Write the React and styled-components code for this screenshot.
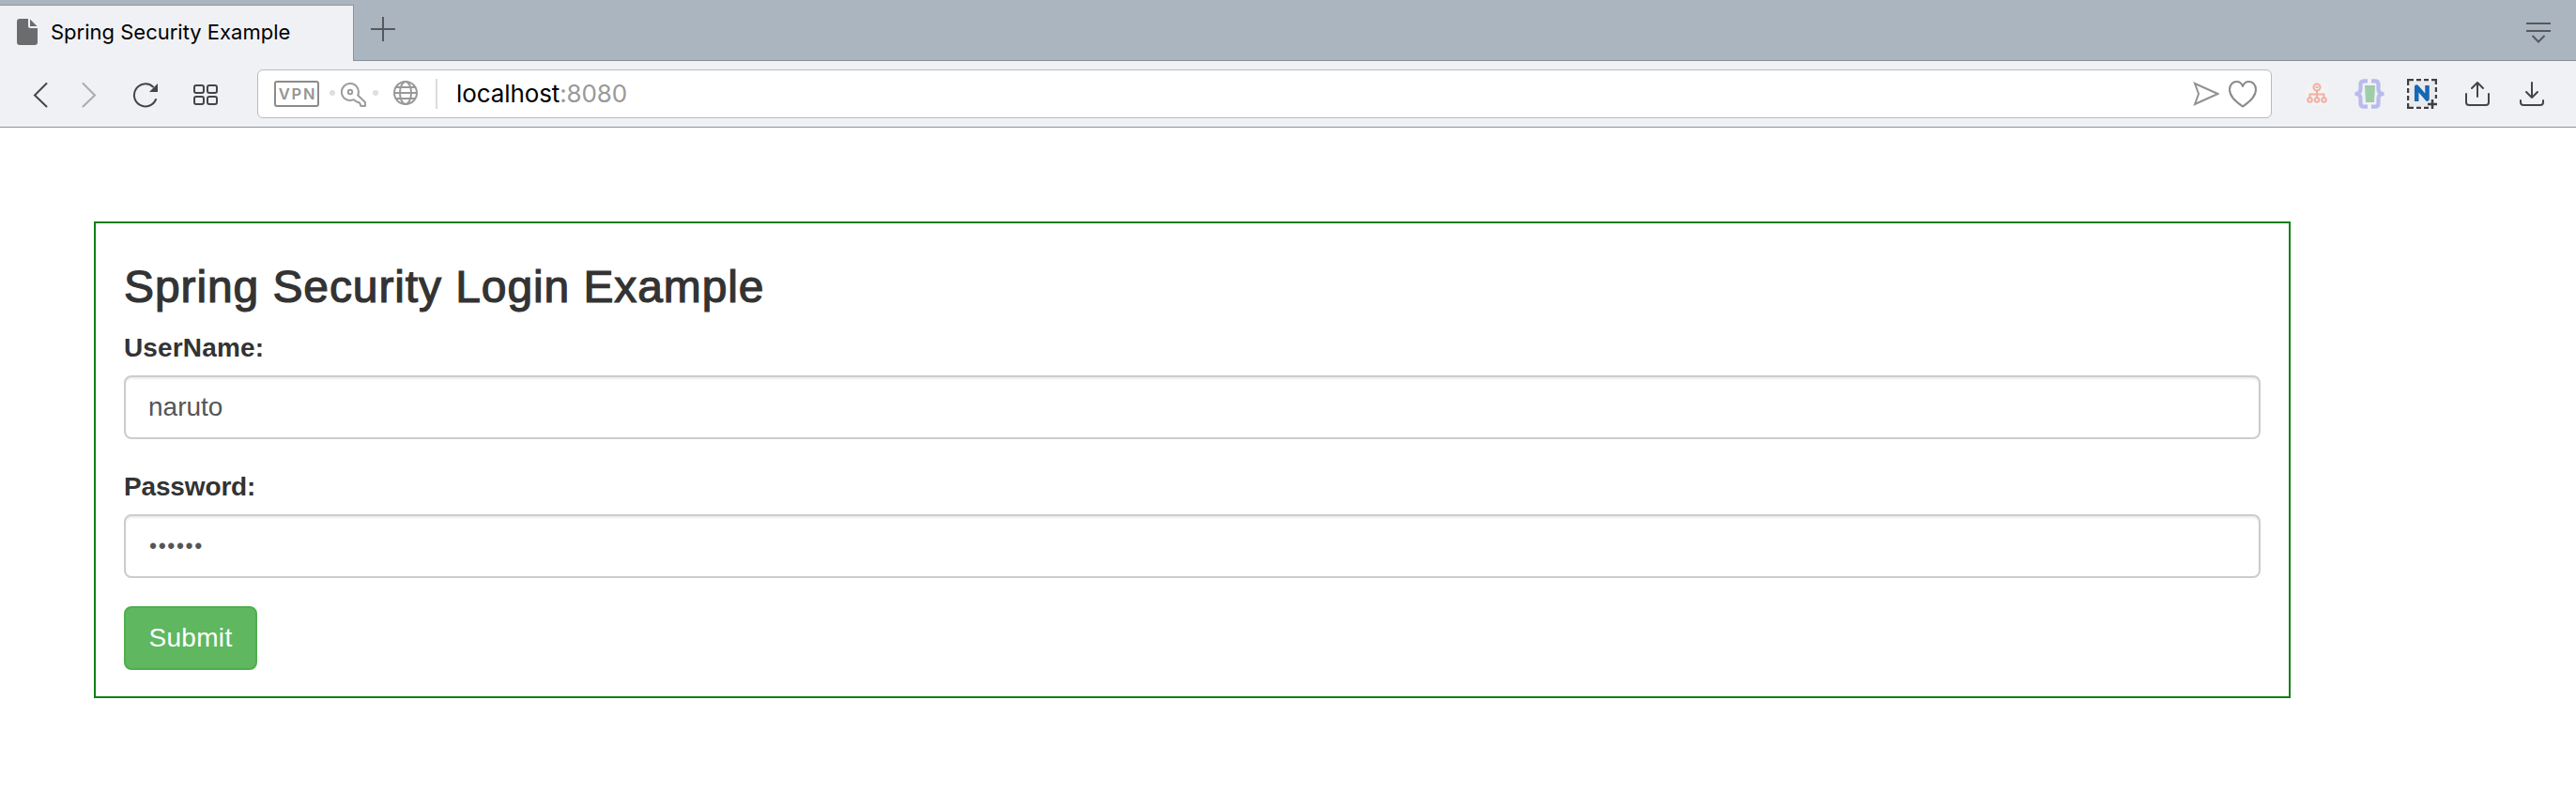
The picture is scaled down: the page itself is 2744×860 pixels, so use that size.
import React from "react";
import styled, { createGlobalStyle } from "styled-components";

const GlobalStyle = createGlobalStyle`
  * { box-sizing: border-box; }
  body { margin: 0; background: #fff; }
`;

const ui = `Inter, Roboto, "Liberation Sans", sans-serif`;
const page = `"Helvetica Neue", Helvetica, "Liberation Sans", Arial, sans-serif`;

const Window = styled.div`
  width: 2744px;
  height: 860px;
  background: #fff;
  overflow: hidden;
`;

const TabStrip = styled.div`
  height: 65px;
  display: flex;
  align-items: flex-end;
  background: #abb5c0;
`;

const Tab = styled.div`
  width: 377px;
  height: 60px;
  padding: 0 0 3px 18px;
  display: flex;
  align-items: center;
  gap: 14px;
  background: #f0f1f4;
  border-top: 1px solid #8a949f;
  border-right: 1px solid #8a949f;
`;

const TabTitle = styled.span`
  font: 400 22px/28px ${ui};
  color: #000;
  white-space: nowrap;
`;

const StripRest = styled.div`
  flex: 1;
  height: 65px;
  padding: 18px 27px 0 18px;
  display: flex;
  justify-content: space-between;
  align-items: flex-start;
  border-bottom: 1px solid #84909c;
`;

const Toolbar = styled.div`
  height: 71px;
  display: flex;
  align-items: center;
  padding: 0 33px 0 34px;
  background: #f0f1f4;
  border-bottom: 1px solid #8b939b;
`;

const Icon = styled.svg`
  display: block;
  flex: none;
  width: ${(p) => p.$w}px;
  height: ${(p) => p.$h}px;
  margin-left: ${(p) => p.$ml || 0}px;
  margin-top: ${(p) => p.$mt || 0}px;
  fill: none;
  stroke: ${(p) => p.$color || "#444547"};
  stroke-width: ${(p) => p.$sw || 2};
`;

const AddressBar = styled.div`
  flex: none;
  width: 2146px;
  height: 52px;
  margin-left: 41px;
  padding: 0 14px 0 17px;
  display: flex;
  align-items: center;
  background: #fff;
  border: 1px solid #b7babf;
  border-radius: 6px;
`;

const VpnBadge = styled.div`
  width: 48px;
  height: 28px;
  padding-left: 2px;
  border: 2px solid #8b8b8b;
  border-radius: 3px;
  font: 600 16.5px/24px ${ui};
  letter-spacing: 1.7px;
  text-align: center;
  color: #959595;
`;

const Dot = styled.span`
  width: 6px;
  height: 6px;
  margin-left: ${(p) => p.$ml}px;
  margin-bottom: 2px;
  border-radius: 50%;
  background: #dddfdf;
`;

const Divider = styled.span`
  width: 2px;
  height: 32px;
  margin-left: 18px;
  background: #dcdcde;
`;

const Url = styled.span`
  flex: 1;
  margin-left: 20px;
  font: 400 26px/32px ${ui};
  letter-spacing: -0.1px;
  color: #000;
`;

const Port = styled.span`
  color: #999;
`;

const Card = styled.main`
  width: 2340px;
  height: 508px;
  margin: 100px 0 0 100px;
  padding: 41px 30px 28px;
  border: 2px solid #118014;
  font-family: ${page};
`;

const Title = styled.h1`
  margin: 0 0 17px;
  font-size: 48px;
  font-weight: 400;
  line-height: 54px;
  letter-spacing: 0.9px;
  color: #333;
  -webkit-text-stroke: 1.2px #333;
`;

const Field = styled.div`
  margin-bottom: 30px;
`;

const Label = styled.label`
  display: block;
  height: 50px;
  padding-top: 1px;
  font-size: 28px;
  font-weight: 700;
  line-height: 40px;
  letter-spacing: ${(p) => p.$track}px;
  color: #333;
`;

const Input = styled.input`
  display: block;
  width: 100%;
  height: 68px;
  padding: 12px 24px;
  font: 400 28px/40px ${page};
  color: #555;
  background: #fff;
  border: 2px solid #ccc;
  border-radius: 8px;
  box-shadow: inset 0 2px 2px rgba(0, 0, 0, 0.075);
  outline: 0;
`;

const PasswordInput = styled(Input)`
  padding-left: 25px;
  font-size: 23px;
  letter-spacing: 1.6px;
`;

const Submit = styled.button`
  display: block;
  width: 142px;
  height: 68px;
  padding: 0;
  font: 400 28px/40px ${page};
  letter-spacing: 0.3px;
  color: #fff;
  background: #5fb760;
  border: 2px solid #4fae50;
  border-radius: 8px;
`;

export default function App() {
  return (
    <Window>
      <GlobalStyle />
      <TabStrip>
        <Tab>
          <Icon $w={22} $h={28} viewBox="0 0 22 28">
            <g fill="#6b6c6e" stroke="none">
              <path d="M3 0H12V7.500Q12 10 14.500 10H22V25Q22 28 19 28H3Q0 28 0 25V3Q0 0 3 0Z" />
              <path d="M14 0.500L21.500 8H14Z" />
            </g>
          </Icon>
          <TabTitle>Spring Security Example</TabTitle>
        </Tab>
        <StripRest>
          <Icon $w={26} $h={26} viewBox="0 0 26 26" $color="#55595e">
            <path d="M13 0V26M0 13H26" />
          </Icon>
          <Icon $w={26} $h={22} $mt={6} viewBox="0 0 26 22" $color="#55595e">
            <path d="M0 1H26M0 9H26M6.500 14L13 20.500L19.500 14" />
          </Icon>
        </StripRest>
      </TabStrip>

      <Toolbar>
        <Icon $w={18} $h={28} $mt={1} viewBox="0 0 18 28"><path strokeLinecap="round" d="M15.500 2L3 14.500L15.500 26.500" /></Icon>
        <Icon $w={18} $h={28} $ml={34} $mt={1} viewBox="0 0 18 28" $color="#a9abad"><path strokeLinecap="round" d="M2.500 2L15 14.500L2.500 26.500" /></Icon>
        <Icon $w={28} $h={28} $ml={37} $mt={1} viewBox="0 0 28 28">
          <path strokeLinecap="round" d="M25 19A12 12 0 1 1 22 5.500" />
          <path fill="#444547" stroke="none" d="M27 2V11H18Z" />
        </Icon>
        <Icon $w={28} $h={24} $ml={36} $mt={1} viewBox="0 0 28 24">
          <rect x="2" y="2" width="10" height="8" rx="2" /><rect x="16" y="2" width="10" height="8" rx="2" />
          <rect x="2" y="14" width="10" height="8" rx="2" /><rect x="16" y="14" width="10" height="8" rx="2" />
        </Icon>

        <AddressBar>
          <VpnBadge>VPN</VpnBadge>
          <Dot $ml={11} />
          <Icon $w={28} $h={28} $ml={6} $mt={1} viewBox="0 0 28 28" $color="#9c9c9c">
            <circle cx="10" cy="11" r="2.200" />
            <path strokeLinejoin="round" d="M18.200 14.500L26 22V26H21.500L20 22.500L17 21.500L13.600 19.200A9 9 0 1 1 18.200 14.500Z" />
          </Icon>
          <Dot $ml={6} />
          <Icon $w={28} $h={28} $ml={15} $mt={-2} viewBox="0 0 28 28" $color="#999">
            <circle cx="14" cy="14" r="12" /><ellipse cx="14" cy="14" rx="6" ry="12" />
            <path d="M2 14H26M4 8H24M4 20H24" />
          </Icon>
          <Divider />
          <Url>localhost<Port>:8080</Port></Url>
          <Icon $w={28} $h={28} viewBox="0 0 28 28" $color="#929292">
            <path d="M2 3L26.500 14L2 25L6 14Z" />
          </Icon>
          <Icon $w={32} $h={30} $ml={9} viewBox="0 0 32 30" $color="#8a8a8a">
            <path strokeLinejoin="round" d="M16 28.500C11 25 2 19 2 10.500C2 5 5.500 2 9.500 2C12.500 2 15 4 16 7C17 4 19.500 2 22.500 2C26.500 2 30 5 30 10.500C30 19 21 25 16 28.500Z" />
          </Icon>
        </AddressBar>

        <Icon $w={24} $h={24} $ml={36} viewBox="0 0 24 24" $color="#f1afa3">
          <rect width="24" height="24" rx="3" fill="#f3f3f3" stroke="none" />
          <circle cx="12" cy="5" r="3.500" /><circle cx="4.500" cy="18.500" r="2.300" /><circle cx="12" cy="18.500" r="2.300" /><circle cx="19.500" cy="18.500" r="2.300" />
          <path d="M12 8V16M4.500 16V12.500H19.500V16M10.500 5H13.500" />
        </Icon>
        <Icon $w={32} $h={32} $ml={28} viewBox="0 0 32 32" $color="#b9bbec" $sw={4.2}>
          <path d="M14 2.300H10Q6.500 2.300 6.500 6V11Q6.500 16 0.500 16Q6.500 16 6.500 21V26Q6.500 29.700 10 29.700H14" />
          <path d="M18 2.300H22Q25.500 2.300 25.500 6V11Q25.500 16 31.500 16Q25.500 16 25.500 21V26Q25.500 29.700 22 29.700H18" />
          <path fill="#9fcda8" stroke="none" d="M11 7H22L21 25H12Z" />
        </Icon>
        <Icon $w={32} $h={32} $ml={24} viewBox="0 0 32 32" $color="#3f3f42">
          <path fill="#e9eaec" stroke="none" d="M3 3H29V29H3Z" />
          <path strokeWidth="2.500" d="M1 7V1H7M10 1H15M18 1H23M26 1H31V6M31 9V14M31 17V21M1 10V15M1 18V23M1 26V31H7M10 31H15M18 31H23" />
          <path stroke="#1768b3" strokeWidth="4.500" strokeLinejoin="round" d="M10.200 24V8.500L21.500 21.500V7" />
          <path strokeWidth="2.500" d="M27 22V32M22 27H32" />
        </Icon>
        <Icon $w={28} $h={28} $ml={29} viewBox="0 0 28 28">
          <path strokeLinecap="round" strokeLinejoin="round" d="M2 14V23Q2 26 5 26H23Q26 26 26 23V14M14 17V2M8 8L14 2L20 8" />
        </Icon>
        <Icon $w={28} $h={28} $ml={30} viewBox="0 0 28 28">
          <path strokeLinecap="round" strokeLinejoin="round" d="M2 21V23Q2 26 5 26H23Q26 26 26 23V21M14 2V18M8 12L14 18L20 12" />
        </Icon>
      </Toolbar>

      <Card>
        <Title>Spring Security Login Example</Title>
        <Field>
          <Label htmlFor="username" $track={0.15}>UserName:</Label>
          <Input id="username" defaultValue="naruto" />
        </Field>
        <Field>
          <Label htmlFor="password" $track={-0.15}>Password:</Label>
          <PasswordInput id="password" type="password" defaultValue="naruto" />
        </Field>
        <Submit>Submit</Submit>
      </Card>
    </Window>
  );
}
